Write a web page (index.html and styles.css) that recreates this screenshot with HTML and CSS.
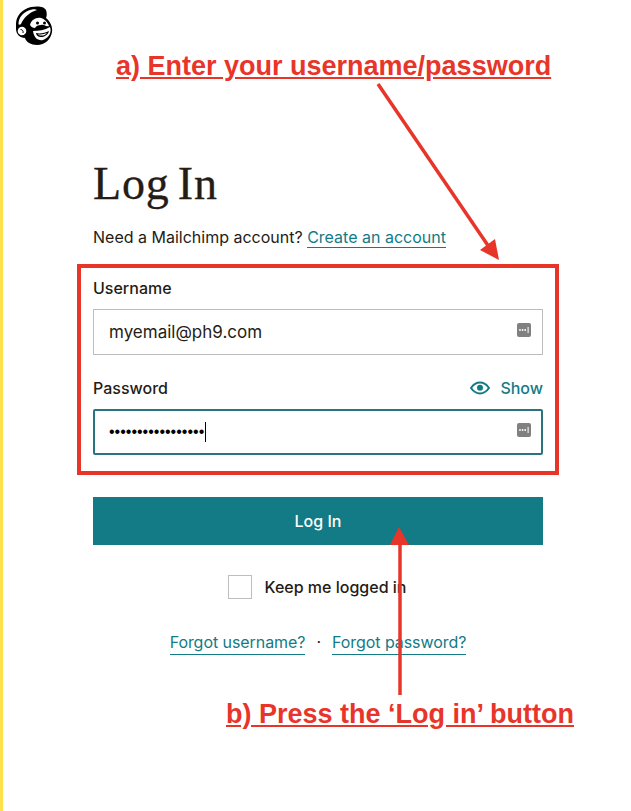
FILE: index.html
```html
<!DOCTYPE html>
<html lang="en">
<head>
<meta charset="utf-8">
<title>Log In</title>
<link rel="stylesheet" href="styles.css">
</head>
<body>
<div class="page">
  <header class="top">
    <svg class="logo" viewBox="12 2 44 46" width="44" height="46" aria-label="Mailchimp">
      <path d="M16 24C16 16 22 9 31 7c6-1 13-1 15 3 1 3 1 6 0 8 4 3 7 9 6 14-1 7-7 13-15 13-6 0-11-3-12-7-5 0-9-4-9-9z" fill="#000"/>
      <path d="M18.500 24c0-7 5.500-13 13.500-14.500 2-.5 4 0 5 .5-7 2-13 7-16 14-1 1-2.500 1-2.500 0z" fill="#fff"/>
      <circle cx="22" cy="31" r="4.300" fill="#fff"/>
      <path d="M20.500 29.500c2 0 3 1.500 2.500 3.500" fill="none" stroke="#000" stroke-width="1"/>
      <path d="M30 25c1-5 6-8 11-7 4 1 7 5 8 8-3 1-5-2-8-1-3 0-5 1-6 3-2 0-4-1-5-3z" fill="#fff"/>
      <path d="M33 31c5 0 12-1 17-4 2 5-1 11-7 13-5 1-9-2-10-9z" fill="#fff"/>
      <path d="M36 33c4 1 9 0 13-2-1 4-5 6-8 6-3 0-5-2-5-4z" fill="#000"/>
      <path d="M38 34.200c3 .6 6 0 9-1.200-1 1.600-3.500 2.600-5.500 2.600-1.500 0-3-.4-3.500-1.400z" fill="#fff"/>
      <circle cx="37.500" cy="23" r="1.500" fill="#000"/>
      <circle cx="44.500" cy="23" r="1.500" fill="#000"/>
    </svg>
  </header>
  <main class="login">
    <h1 class="title">Log In</h1>
    <p class="intro">Need a Mailchimp account? <a class="link" href="#">Create an account</a></p>
    <form class="form">
      <div class="label-row"><label class="label">Username</label></div>
      <div class="input">
        <span class="value">myemail@ph9.com</span>
        <svg class="key" viewBox="0 0 14 14" width="14" height="14"><rect width="14" height="14" rx="2" fill="#808080"/><circle cx="3" cy="7" r=".9" fill="#fff"/><circle cx="5.600" cy="7" r=".9" fill="#fff"/><circle cx="8.200" cy="7" r=".9" fill="#fff"/><rect x="10.600" y="4" width="1" height="6" fill="#fff"/></svg>
      </div>
      <div class="label-row second">
        <label class="label">Password</label>
        <a class="show" href="#">
          <svg class="eye" viewBox="0 0 20 14" width="20" height="14"><path d="M1 7c2.500-3.600 5.500-5.400 9-5.400S16.500 3.400 19 7c-2.500 3.600-5.500 5.400-9 5.400S3.500 10.600 1 7z" fill="none" stroke="#127b86" stroke-width="2"/><circle cx="10" cy="6.800" r="3" fill="#127b86"/></svg>
          Show
        </a>
      </div>
      <div class="input focused">
        <span class="dots">•••••••••••••••••</span><span class="caret"></span>
        <svg class="key" viewBox="0 0 14 14" width="14" height="14"><rect width="14" height="14" rx="2" fill="#808080"/><circle cx="3" cy="7" r=".9" fill="#fff"/><circle cx="5.600" cy="7" r=".9" fill="#fff"/><circle cx="8.200" cy="7" r=".9" fill="#fff"/><rect x="10.600" y="4" width="1" height="6" fill="#fff"/></svg>
      </div>
      <button class="submit" type="button">Log In</button>
      <div class="keep"><span class="checkbox"></span><span class="keep-text">Keep me logged in</span></div>
      <div class="forgot">
        <a class="link" href="#">Forgot username?</a>
        <span class="sep">·</span>
        <a class="link" href="#">Forgot password?</a>
      </div>
    </form>
  </main>
  <div class="note note-a">a) Enter your username/password</div>
  <div class="note note-b">b) Press the ‘Log in’ button</div>
  <div class="redbox"></div>
  <svg class="arrows" viewBox="0 0 631 811" width="631" height="811">
    <line x1="378" y1="84" x2="489" y2="247" stroke="#e8352a" stroke-width="3.500"/>
    <polygon points="499,260 480,250 495,239" fill="#e8352a"/>
    <line x1="400" y1="695" x2="400" y2="540" stroke="#e8352a" stroke-width="3.500"/>
    <polygon points="399,527 390,545 409,545" fill="#e8352a"/>
  </svg>
</div>
</body>
</html>
```
FILE: styles.css
```css
* { box-sizing: border-box; }
html, body { margin: 0; padding: 0; background: #fff; }
body { font-family: "Inter", "Liberation Sans", sans-serif; color: #241c15; overflow: hidden; }
.page { position: relative; width: 631px; height: 811px; border-left: 3px solid #ffe04b; overflow: hidden; }
.top { height: 50px; padding: 2px 0 0 9px; }
.logo { display: block; }
.login { padding: 0 0 0 90px; width: 540px; }
.title { margin: 104px 0 0; font: 400 46px/60px "Liberation Serif", serif; letter-spacing: .8px; word-spacing: -4px; color: #241c15; -webkit-text-stroke: .3px #241c15; }
.intro { margin: 11px 0 0; font-size: 16px; line-height: 24px; }
.link { color: #127b86; text-decoration: none; border-bottom: 1px solid #127b86; }
.form { width: 450px; }
.label-row { display: flex; justify-content: space-between; align-items: center; height: 24px; margin: 27px 0 9px; }
.label-row.second { margin: 21px 0 9px; }
.label { font-size: 16px; font-weight: 500; line-height: 24px; }
.show { display: flex; align-items: center; gap: 10px; color: #127b86; font-size: 16px; font-weight: 500; line-height: 24px; text-decoration: none; }
.eye { display: block; }
.input { display: flex; align-items: center; height: 46px; padding: 0 11px 0 15px; border: 1px solid #bdbdbd; font-size: 17px; line-height: 24px; }
.input.focused { border: 2px solid #2a7480; border-radius: 2px; padding: 0 10px 0 14px; }
.value { flex: 1; }
.dots { font: 400 16px/24px "Liberation Sans", sans-serif; color: #000; }
.caret { display: block; width: 1px; height: 20px; margin-left: 1px; background: #000; }
.input.focused .key { margin-left: auto; }
.key { display: block; flex: none; margin-bottom: 4px; }
.submit { display: block; width: 100%; height: 48px; margin-top: 42px; border: 0; background: #127b86; color: #fff; font-family: "Inter", sans-serif; font-size: 16px; font-weight: 500; line-height: 24px; }
.keep { display: flex; align-items: center; justify-content: center; gap: 13px; margin-top: 30px; padding-right: 2px; }
.checkbox { display: block; width: 24px; height: 24px; border: 1px solid #bdbdbd; background: #fff; }
.keep-text { font-size: 16px; font-weight: 500; line-height: 24px; }
.forgot { display: flex; justify-content: center; gap: 11px; margin-top: 31px; font-size: 16px; letter-spacing: -.06px; line-height: 24px; }
.note { position: absolute; color: #e8352a; font: 700 27px/32px "Liberation Sans", sans-serif; text-decoration: underline; white-space: nowrap; }
.note-a { left: 113px; top: 50px; }
.note-b { left: 223px; top: 698px; }
.redbox { position: absolute; left: 74px; top: 264px; width: 482px; height: 211px; border: 4px solid #e8352a; }
.arrows { position: absolute; left: -3px; top: 0; pointer-events: none; }
```
